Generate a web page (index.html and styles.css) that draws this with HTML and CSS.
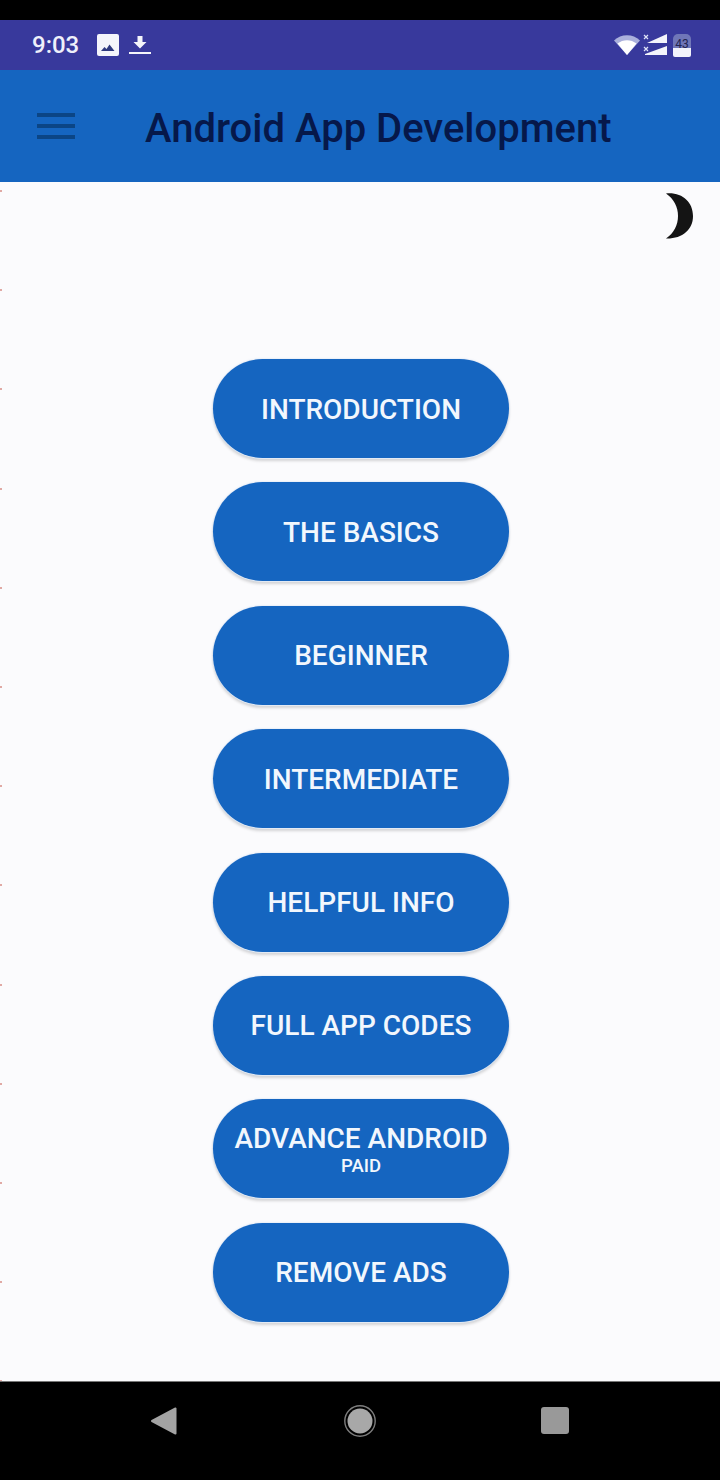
FILE: index.html
```html
<!DOCTYPE html>
<html>
  <head>
    <title>Android App Development</title>
    <link rel="stylesheet" href="styles.css">
  </head>
  <body>
    <div class="notch"></div>

    <div class="statusbar">
      <span class="time">9:03</span>
      <svg class="icon-image" width="22" height="22" viewBox="0 0 22 22">
        <rect x="0" y="0" width="22" height="22" rx="2" fill="#f4f5fb"/>
        <path d="M4 17l3.500-4 2 2 3-4.500 5 6.500z" fill="#2f3a80"/>
      </svg>
      <svg class="icon-download" width="22" height="22" viewBox="0 0 22 22">
        <path d="M8.500 2h5v6h4l-6.500 6.500L4.500 8h4z" fill="#f4f5fb"/>
        <rect x="0" y="18" width="22" height="2" fill="#f4f5fb"/>
      </svg>
      <div class="status-right">
        <svg width="26" height="20" viewBox="0 0 26 20">
          <path d="M0 5.500C7-1.500 19-1.500 26 5.500L13 20z" fill="#aab0dc"/>
          <path d="M3.500 8.500C9 4 17 4 22.500 8.500L13 20z" fill="#fff"/>
        </svg>
        <svg class="icon-signal" width="24" height="24" viewBox="0 0 24 24">
          <path d="M24 1v9H4z" fill="#f4f5fb"/>
          <path d="M24 13v9H2v-1z" fill="#f4f5fb"/>
          <path d="M1 2l4 4M5 2L1 6M1 14l4 4M5 14l-4 4" stroke="#dfe3f7" stroke-width="1.200"/>
        </svg>
        <div class="battery"><span>43</span></div>
      </div>
    </div>

    <div class="appbar">
      <div class="burger"><i></i><i></i><i></i></div>
      <div class="title">Android App Development</div>
    </div>

    <div class="content">
      <div class="ticks"></div>
      <div class="moon-row">
        <svg width="30" height="46" viewBox="0 0 30 46">
          <path d="M2 .5C18-1 29 9 29 23S18 46 2 45.500C10 40 14 32 14 23S10 6 2 .5z" fill="#141414"/>
        </svg>
      </div>
      <div class="menu">
        <button class="pill">INTRODUCTION</button>
        <button class="pill">THE BASICS</button>
        <button class="pill">BEGINNER</button>
        <button class="pill">INTERMEDIATE</button>
        <button class="pill">HELPFUL INFO</button>
        <button class="pill">FULL APP CODES</button>
        <button class="pill">ADVANCE ANDROID<small>PAID</small></button>
        <button class="pill">REMOVE ADS</button>
      </div>
    </div>

    <div class="navbar">
      <svg width="28" height="30" viewBox="0 0 28 30">
        <path d="M25.500 2.500v25L2 15z" fill="#a3a3a3" stroke="#a3a3a3" stroke-width="2" stroke-linejoin="round"/>
      </svg>
      <svg width="34" height="34" viewBox="0 0 34 34">
        <circle cx="17" cy="17" r="15.200" fill="none" stroke="#7d7d7d" stroke-width="1.400"/>
        <circle cx="17" cy="17" r="12.500" fill="#a8a8a8"/>
      </svg>
      <div class="nav-square"></div>
    </div>
  </body>
</html>
```

FILE: styles.css
```css
body { margin: 0; width: 720px; height: 1480px; display: flex; flex-direction: column; font-family: Roboto, "Liberation Sans", sans-serif; background: #000; overflow: hidden; }

.notch { height: 20px; background: #000; }

.statusbar { height: 50px; background: #38399c; display: flex; align-items: center; padding: 0 32px; box-sizing: border-box; color: #eef0fa; }
.time { font-size: 24px; font-weight: 500; margin-right: 18px; }
.icon-image { margin-right: 10px; }
.status-right { margin-left: auto; margin-right: -3px; display: flex; align-items: center; gap: 3px; }
.battery { width: 18px; height: 23px; margin-left: 3px; background: linear-gradient(#6f76b8 60%, #f2f3fb 60%); border-radius: 5px 5px 2px 2px; display: flex; align-items: center; justify-content: center; }
.battery span { font-size: 12px; color: #22244f; margin-top: -2px; }

.appbar { height: 112px; background: #1565c0; display: flex; align-items: center; padding-left: 37px; }
.burger { width: 38px; display: flex; flex-direction: column; gap: 7px; margin-right: 70px; }
.burger i { display: block; height: 4px; background: #0b4585; }
.title { font-size: 40px; font-weight: 500; color: #06184a; white-space: nowrap; padding-top: 5px; }

.content { flex: 1; position: relative; background: #fbfbfd; display: flex; flex-direction: column; }
.ticks { position: absolute; left: 0; top: 8px; bottom: 0; width: 2px; background: repeating-linear-gradient(#e0a9a4 0 2px, transparent 2px 99.200px); }
.moon-row { display: flex; justify-content: flex-end; padding: 11px 26px 0 0; height: 177px; box-sizing: border-box; }

.menu { display: flex; flex-direction: column; align-items: center; gap: 24.400px; padding-left: 2px; }
.pill { width: 296px; height: 99px; border: none; border-radius: 50px; background: #1565c0; color: #f2f7fd; font-family: inherit; font-size: 28px; font-weight: 500; line-height: 30px; padding: 2px 0 0; box-shadow: 0 1px 1px #e6eef8, 0 3px 3px rgba(0, 0, 0, 0.16), 0 0 2px rgba(90, 140, 210, 0.35); }
.pill small { display: block; font-size: 18.500px; line-height: 20px; margin-top: 2px; }

.navbar { height: 99px; background: #000; border-top: 1px solid #777; box-sizing: border-box; display: flex; align-items: center; padding: 0 151px 21px 150px; justify-content: space-between; }
.nav-square { width: 28px; height: 27px; border-radius: 3px; background: #999; }
```
